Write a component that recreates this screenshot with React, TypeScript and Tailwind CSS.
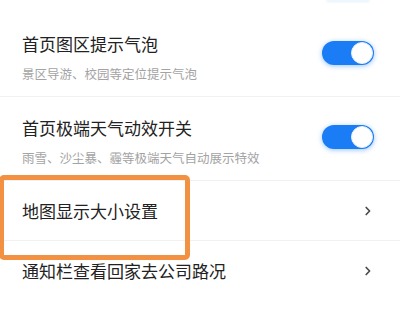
import React from "react";

function Toggle() {
  return (
    <div className="relative w-[52px] h-[24px] rounded-full bg-[#1a7df5] shadow-[0_1px_5px_rgba(26,125,245,0.45)] mt-[8.5px] shrink-0">
      <div className="absolute right-[1px] top-[1px] w-[22px] h-[22px] rounded-full bg-white border border-[#e6eef8]" />
    </div>
  );
}

function Chevron() {
  return (
    <svg width="8" height="10" viewBox="0 0 8 10" className="shrink-0 mr-[2px]">
      <path d="M2.2 1.5 L5.6 5 L2.2 8.5" fill="none" stroke="#4a4a4a" strokeWidth="1.7" strokeLinecap="round" strokeLinejoin="round" />
    </svg>
  );
}

function ToggleRow({ title, sub }: { title: string; sub: string }) {
  return (
    <div className="flex items-start justify-between h-[84px] pt-[19px] pl-[22px] pr-[26px] border-b border-[#f1f1f1]">
      <div className="flex flex-col">
        <div className="text-[17px] leading-[24px] text-[#222]">{title}</div>
        <div className="text-[12.5px] leading-[18px] text-[#a3a3a3] mt-[9px]">{sub}</div>
      </div>
      <Toggle />
    </div>
  );
}

function LinkRow({ title, border }: { title: string; border?: boolean }) {
  return (
    <div className={"flex items-center justify-between h-[60px] pl-[22px] pr-[26px] " + (border ? "border-b border-[#f1f1f1]" : "")}>
      <div className="text-[17px] leading-[24px] text-[#222]">{title}</div>
      <Chevron />
    </div>
  );
}

export default function App() {
  return (
    <div
      className="w-[400px] h-[309px] bg-white overflow-hidden relative"
      style={{ fontFamily: '"Noto Sans CJK SC", "Noto Sans", sans-serif' }}
    >
      <div className="h-[13px] relative">
        <div className="absolute left-[326px] top-0 w-[44px] h-[2px] rounded-full bg-[#e3f0fe] blur-[1px]" />
      </div>
      <ToggleRow title="首页图区提示气泡" sub="景区导游、校园等定位提示气泡" />
      <ToggleRow title="首页极端天气动效开关" sub="雨雪、沙尘暴、霾等极端天气自动展示特效" />
      <LinkRow title="地图显示大小设置" border />
      <LinkRow title="通知栏查看回家去公司路况" />
      <div className="absolute left-[-1px] top-[175px] w-[191px] h-[85px] border-[5px] border-[#f39142] rounded-[5px] pointer-events-none" />
    </div>
  );
}
